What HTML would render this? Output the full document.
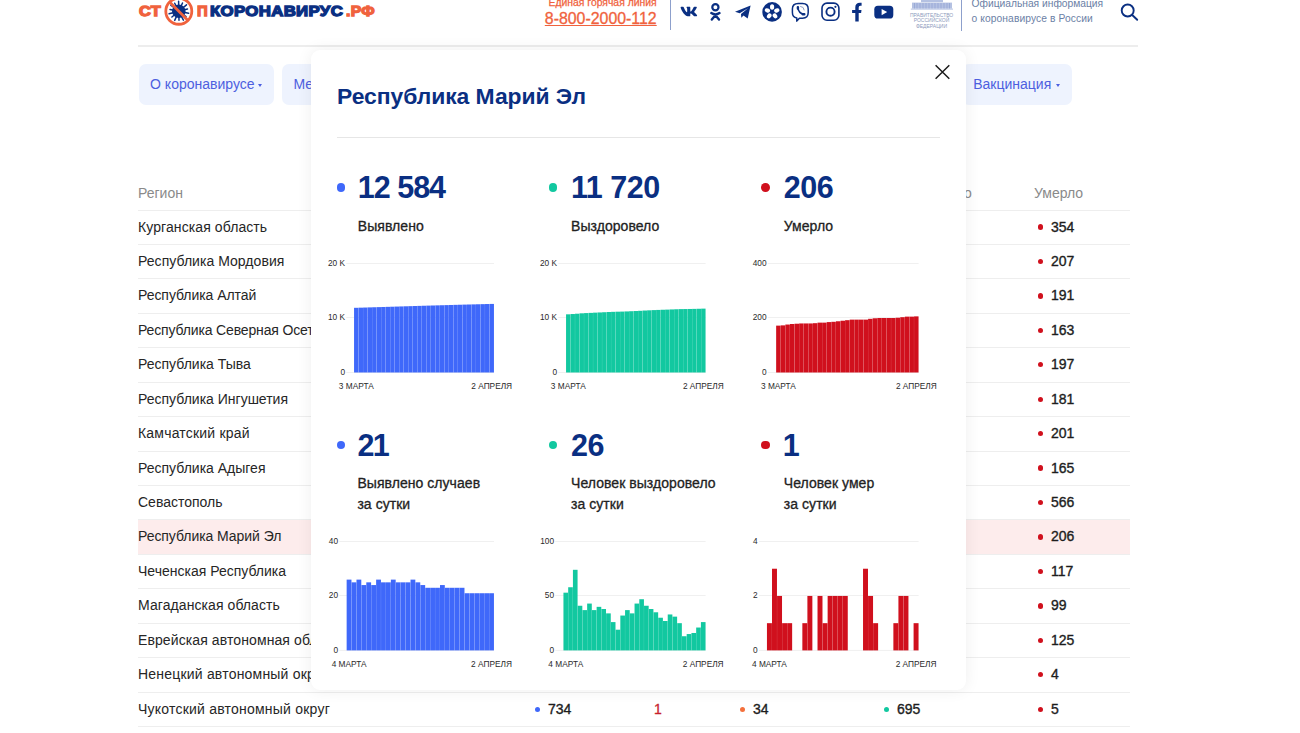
<!DOCTYPE html>
<html lang="ru">
<head>
<meta charset="utf-8">
<title>Стопкоронавирус.рф — Республика Марий Эл</title>
<style>
*{box-sizing:border-box;margin:0;padding:0}
html,body{width:1300px;height:733px;overflow:hidden;background:#fff}
body{font-family:"Liberation Sans",sans-serif;color:#222;position:relative}
.abs{position:absolute}
/* header */
.lg{position:absolute;top:3.05px;letter-spacing:0.3px;transform-origin:0 0;font-size:15px;line-height:16px;font-weight:bold;white-space:nowrap}
.lg.o{color:#f0623d;-webkit-text-stroke:1.3px #f0623d}
.lg.n{color:#0a2f82;-webkit-text-stroke:1.3px #0a2f82}
.gov{position:absolute;left:910px;width:43px;text-align:center;font-size:5px;line-height:5px;color:#8e9bbd;white-space:nowrap}
.hot1{position:absolute;left:548.5px;top:-4.2px;font-size:10.4px;line-height:14px;color:#f0623d;white-space:nowrap;-webkit-text-stroke:0.25px #f0623d}
.hot2{position:absolute;left:544.8px;top:9.7px;-webkit-text-stroke:0.3px #f0623d;font-size:15.9px;line-height:18px;color:#f0623d;text-decoration:underline;text-decoration-thickness:1px;text-underline-offset:1.3px;white-space:nowrap}
.vl{position:absolute;width:1.2px;background:#8da0cc}
.off{position:absolute;left:971.5px;top:-3.8px;font-size:10.25px;line-height:15.1px;color:#6c7fa6;white-space:nowrap}
.hsep{position:absolute;left:138px;top:45px;width:1000px;height:1.6px;background:#ededed}
.nav{position:absolute;top:63.9px;height:41.1px;border-radius:7px;background:#eef3fe;color:#4d5fe0;font-size:14px;line-height:41px;padding-left:11.2px;white-space:nowrap}
.nav b{position:absolute;top:20.5px;width:0;height:0;border-left:2.5px solid transparent;border-right:2.5px solid transparent;border-top:3.9px solid #4d5fe0;margin-left:-0.3px}
/* table */
.th{position:absolute;top:185px;font-size:14px;color:#8a8a8a;white-space:nowrap}
.tr{position:absolute;left:138px;width:992px;height:34.44px;border-top:1px solid #eeeeee;font-size:14px;line-height:33.6px;color:#262626;white-space:nowrap}
.tr.hl{background:#fdecec}
.tr span{position:absolute;top:0}
.tr .c0{left:0}
.tr .c1{-webkit-text-stroke:0.36px #1d1d1d;color:#1d1d1d;left:397px;}
.tr .c2{left:516px;color:#c81f2b;-webkit-text-stroke:0.3px #c81f2b}
.tr .c3{-webkit-text-stroke:0.36px #1d1d1d;color:#1d1d1d;left:602px}
.tr .c4{-webkit-text-stroke:0.36px #1d1d1d;color:#1d1d1d;left:746px}
.tr .c5{-webkit-text-stroke:0.36px #1d1d1d;color:#1d1d1d;left:900px}
.tr .d{display:inline-block;width:5.3px;height:5.3px;border-radius:50%;margin-right:7.8px;margin-left:-0.1px;position:relative;top:-1.8px}
/* modal */
.modal{position:absolute;left:311px;top:49.5px;width:655px;height:640.5px;background:#fff;border-radius:9px;box-shadow:0 0 16px rgba(0,0,0,.07)}
.title{position:absolute;left:337px;top:81.1px;font-size:22.9px;line-height:30px;font-weight:bold;color:#0a2f82;white-space:nowrap;letter-spacing:-0.05px}
.msep{position:absolute;left:337px;top:137px;width:603px;height:1px;background:#e6e6e6}
.dot{position:absolute;width:8.8px;height:8.8px;border-radius:50%}
.num{position:absolute;font-size:30.5px;line-height:34px;letter-spacing:-0.5px;font-weight:bold;color:#0a2f82;white-space:nowrap}
.lab{position:absolute;font-size:14px;line-height:21px;letter-spacing:0.05px;color:#222;white-space:nowrap;-webkit-text-stroke:0.3px #222}
svg text.ax{font-family:"Liberation Sans",sans-serif;font-size:8.3px;fill:#2a2a2a}
</style>
</head>
<body>
<!-- header -->
<div class="lg o" id="lg1" style="left:139.4px;transform:scaleX(1.09)">СТ</div>
<div class="lg o" id="lg2" style="left:197.45px;transform:scaleX(0.99)">П</div>
<div class="lg n" id="lg3" style="left:210.2px;transform:scaleX(1.12)">КОРОНАВИРУС</div>
<div class="lg o" id="lg4" style="left:346.1px;transform:scaleX(1.045)">.РФ</div>
<svg class="abs" style="left:160px;top:0" width="40" height="30" viewBox="160 0 40 30">
<g transform="translate(178.8 11.25)">
<g fill="none" stroke="#0a2f82" stroke-width="1.5" stroke-linecap="round">
<path d="M0 0L9.8 2.0M0 0L7.2 5.4M0 0L4.6 8.9M0 0L0.2 9.0M0 0L-4.1 9.1M0 0L-6.9 5.8M0 0L-9.7 2.5M0 0L-8.8 -1.8M0 0L-8.0 -6.0M0 0L-4.1 -8.0M0 0L-0.2 -10.0M0 0L3.7 -8.2M0 0L7.7 -6.4M0 0L8.7 -2.2"/>
</g>
<circle r="6.7" fill="#0a2f82"/>
<circle r="13" fill="none" stroke="#f0623d" stroke-width="2.8"/>
<path d="M-9.2-9.2L9.2 9.2" stroke="#f0623d" stroke-width="2.8"/>
</g>
</svg>
<div class="hot1" id="hot1">Единая горячая линия</div>
<div class="hot2" id="hot2">8-800-2000-112</div>
<div class="vl" style="left:670px;top:0;height:29.5px"></div>
<div class="vl" style="left:961.3px;top:0;height:30.5px"></div>
<svg class="abs" style="left:670px;top:0" width="480" height="34" viewBox="670 0 480 34">
<g fill="none" stroke="#0a2f82" stroke-linecap="round" stroke-linejoin="round">
<!-- vk -->
<!-- ok -->
<circle cx="715.4" cy="7.3" r="3.1" stroke-width="2.2"/>
<path d="M711.3 13.1Q715.4 15.8 719.5 13.1M715.4 15.2L711.8 19.6M715.4 15.2L719 19.6" stroke-width="2.4"/>
<!-- viber -->
<path d="M798.200 3.400h4.400q5.600 0 5.600 5.600v3.600q0 5.600-5.600 5.600h-3.200l-2.600 2.900v-3q-4.400-.6-4.400-5.500v-3.600q0-5.600 5.800-5.600z" stroke-width="1.500"/>
<path d="M798 7.600q-.1 2.800 1.900 4.700 1.900 1.900 3.900 1.700" stroke-width="1.700"/><path d="M797.900 7.100v1.400M802.800 14.300h1.500" stroke-width="2.400"/>
<path d="M800.600 6.400q3.400.2 3.600 3.600" stroke-width="1" stroke="#8d9cc4"/>
<!-- instagram -->
<rect x="822" y="3.100" width="16.900" height="17.100" rx="5" stroke-width="1.600"/>
<circle cx="830.500" cy="11.700" r="4.100" stroke-width="1.900"/>
<!-- search -->
<circle cx="1127.700" cy="10.500" r="6" stroke-width="1.900"/>
<path d="M1132.200 15L1137.200 19.800" stroke-width="1.900"/>
</g>
<g fill="#0a2f82">
<!-- vkf -->
<path transform="translate(680.03 4.0) scale(0.03075 0.0297)" d="M545 117.700c3.700-12.500 0-21.700-17.800-21.700h-58.900c-15 0-21.900 7.900-25.600 16.700 0 0-30 73.100-72.400 120.500-13.700 13.700-20 18.100-27.500 18.100-3.700 0-9.400-4.400-9.400-16.900V117.700c0-15-4.200-21.700-16.600-21.700h-92.600c-9.400 0-15 7-15 13.500 0 14.200 21.200 17.500 23.400 57.500v86.800c0 19-3.400 22.500-10.900 22.500-20 0-68.600-73.400-97.400-157.400-5.800-16.300-11.500-22.900-26.600-22.900H38.800c-16.800 0-20.200 7.900-20.200 16.700 0 15.600 20 93.100 93.100 195.500C160.400 378.100 229 416 291.400 416c37.500 0 42.100-8.400 42.100-22.900 0-66.800-3.400-73.100 15.400-73.100 8.700 0 23.700 4.400 58.700 38.100 40 40 46.600 57.900 69 57.900h58.900c16.800 0 25.200-8.400 20.300-25-11.200-34.900-86.900-106.700-90.300-111.500-8.700-11.200-6.200-16.200 0-26.200.1-.1 72-101.300 79.400-135.600z"/>
<!-- telegram -->
<path d="M735 11.700L750.600 5.600L747.700 18.600L743.500 15.500L741.300 17.700L741 14.100L748 8.200L739.700 13.300Z"/>
<!-- icq -->
<circle cx="772.100" cy="11.900" r="9.800"/>
<!-- insta dot -->
<circle cx="835.400" cy="6.800" r="1.100"/>
<!-- facebook -->
<path d="M855.300 21.400V13.100H852.100V9.900H855.300V7.300Q855.300 2.700 860 2.700H861.600V5.800H860.200Q858.700 5.800 858.700 7.400V9.900H861.500L861.100 13.100H858.700V21.400Z"/>
<!-- youtube -->
<rect x="874.300" y="5.700" width="19" height="12.800" rx="3.600"/>
</g>
<g fill="#fff">
<g transform="translate(772.100 11.900)">
<ellipse cx="0" cy="-4.900" rx="2.100" ry="2.700"/>
<ellipse cx="0" cy="-4.900" rx="2.100" ry="2.700" transform="rotate(72)"/>
<ellipse cx="0" cy="-4.900" rx="2.100" ry="2.700" transform="rotate(144)"/>
<ellipse cx="0" cy="-4.900" rx="2.100" ry="2.700" transform="rotate(216)"/>
<ellipse cx="0" cy="-4.900" rx="2.100" ry="2.700" transform="rotate(288)"/>
</g>
<path d="M881.600 9V15.200L887.200 12.100Z"/>
</g>
<!-- gov building -->
<g fill="#b4c1e2">
<rect x="921" y="0" width="22" height="2.200"/>
<rect x="912" y="2.600" width="40" height="6"/>
<rect x="910.800" y="8.600" width="42.200" height="1"/>
</g>
<g stroke="#8fa2d2" stroke-width=".7">
<path d="M914.500 3v5.500M917 3v5.500M920 3v5.500M923 3v5.500M926 3v5.500M929 3v5.500M932 3v5.500M935 3v5.500M938 3v5.500M941 3v5.500M944 3v5.500M947 3v5.500M949.500 3v5.500"/>
</g>
</svg>
<div class="gov" id="gov1" style="top:13.100px">ПРАВИТЕЛЬСТВО</div>
<div class="gov" id="gov2" style="top:18.300px">РОССИЙСКОЙ</div>
<div class="gov" id="gov3" style="top:23.600px">ФЕДЕРАЦИИ</div>
<div class="off" id="off">Официальная информация<br><span style="letter-spacing:0.1px">о коронавирусе в России</span></div>
<div class="hsep"></div>
<!-- nav -->
<div class="nav" style="left:138.9px;width:134.9px"><span>О коронавирусе</span><b style="left:119.4px"></b></div>
<div class="nav" style="left:282.3px;width:150px"><span>Меры поддержки</span><b style="left:135px"></b></div>
<div class="nav" style="left:442px;width:120px"><span>Что делать</span><b style="left:95px"></b></div>
<div class="nav" style="left:572px;width:105px"><span>Новости</span><b style="left:78px"></b></div>
<div class="nav" style="left:687px;width:130px"><span>Статистика</span><b style="left:102px"></b></div>
<div class="nav" style="left:827px;width:125px"><span>Материалы</span><b style="left:97px"></b></div>
<div class="nav" style="left:962px;width:110.4px"><span>Вакцинация</span><b style="left:94.2px"></b></div>
<!-- table -->
<div class="th" style="left:138px">Регион</div>
<div class="th" style="left:535px">Выявлено</div>
<div class="th" style="left:654px">Новые</div>
<div class="th" style="left:740px">Активные</div>
<div class="th" style="left:884px">Выздоровело</div>
<div class="th" style="left:1034px">Умерло</div>
<div class="tr" style="top:209.50px">
<span class="c0" style="letter-spacing:0.09px">Курганская область</span>
<span class="c1"><i class="d" style="background:#3f68fa"></i>25 812</span>
<span class="c2">94</span>
<span class="c3"><i class="d" style="background:#f4703c"></i>1 210</span>
<span class="c4"><i class="d" style="background:#12c8a0"></i>24 248</span>
<span class="c5"><i class="d" style="background:#d0101d"></i>354</span>
</div>
<div class="tr" style="top:243.94px">
<span class="c0" style="letter-spacing:0.04px">Республика Мордовия</span>
<span class="c1"><i class="d" style="background:#3f68fa"></i>23 904</span>
<span class="c2">61</span>
<span class="c3"><i class="d" style="background:#f4703c"></i>1 034</span>
<span class="c4"><i class="d" style="background:#12c8a0"></i>22 663</span>
<span class="c5"><i class="d" style="background:#d0101d"></i>207</span>
</div>
<div class="tr" style="top:278.38px">
<span class="c0" style="letter-spacing:-0.05px">Республика Алтай</span>
<span class="c1"><i class="d" style="background:#3f68fa"></i>17 412</span>
<span class="c2">17</span>
<span class="c3"><i class="d" style="background:#f4703c"></i>412</span>
<span class="c4"><i class="d" style="background:#12c8a0"></i>16 809</span>
<span class="c5"><i class="d" style="background:#d0101d"></i>191</span>
</div>
<div class="tr" style="top:312.82px">
<span class="c0" style="letter-spacing:-0.15px">Республика Северная Осетия</span>
<span class="c1"><i class="d" style="background:#3f68fa"></i>16 901</span>
<span class="c2">32</span>
<span class="c3"><i class="d" style="background:#f4703c"></i>720</span>
<span class="c4"><i class="d" style="background:#12c8a0"></i>16 018</span>
<span class="c5"><i class="d" style="background:#d0101d"></i>163</span>
</div>
<div class="tr" style="top:347.26px">
<span class="c0" style="letter-spacing:0px">Республика Тыва</span>
<span class="c1"><i class="d" style="background:#3f68fa"></i>16 388</span>
<span class="c2">12</span>
<span class="c3"><i class="d" style="background:#f4703c"></i>238</span>
<span class="c4"><i class="d" style="background:#12c8a0"></i>15 953</span>
<span class="c5"><i class="d" style="background:#d0101d"></i>197</span>
</div>
<div class="tr" style="top:381.70px">
<span class="c0" style="letter-spacing:0px">Республика Ингушетия</span>
<span class="c1"><i class="d" style="background:#3f68fa"></i>15 620</span>
<span class="c2">19</span>
<span class="c3"><i class="d" style="background:#f4703c"></i>301</span>
<span class="c4"><i class="d" style="background:#12c8a0"></i>15 138</span>
<span class="c5"><i class="d" style="background:#d0101d"></i>181</span>
</div>
<div class="tr" style="top:416.14px">
<span class="c0" style="letter-spacing:0.2px">Камчатский край</span>
<span class="c1"><i class="d" style="background:#3f68fa"></i>15 011</span>
<span class="c2">23</span>
<span class="c3"><i class="d" style="background:#f4703c"></i>260</span>
<span class="c4"><i class="d" style="background:#12c8a0"></i>14 550</span>
<span class="c5"><i class="d" style="background:#d0101d"></i>201</span>
</div>
<div class="tr" style="top:450.58px">
<span class="c0" style="letter-spacing:0px">Республика Адыгея</span>
<span class="c1"><i class="d" style="background:#3f68fa"></i>14 620</span>
<span class="c2">27</span>
<span class="c3"><i class="d" style="background:#f4703c"></i>389</span>
<span class="c4"><i class="d" style="background:#12c8a0"></i>14 066</span>
<span class="c5"><i class="d" style="background:#d0101d"></i>165</span>
</div>
<div class="tr" style="top:485.02px">
<span class="c0" style="letter-spacing:0px">Севастополь</span>
<span class="c1"><i class="d" style="background:#3f68fa"></i>14 211</span>
<span class="c2">48</span>
<span class="c3"><i class="d" style="background:#f4703c"></i>1 012</span>
<span class="c4"><i class="d" style="background:#12c8a0"></i>12 633</span>
<span class="c5"><i class="d" style="background:#d0101d"></i>566</span>
</div>
<div class="tr hl" style="top:519.46px">
<span class="c0" style="letter-spacing:-0.06px">Республика Марий Эл</span>
<span class="c1"><i class="d" style="background:#3f68fa"></i>12 584</span>
<span class="c2">21</span>
<span class="c3"><i class="d" style="background:#f4703c"></i>658</span>
<span class="c4"><i class="d" style="background:#12c8a0"></i>11 720</span>
<span class="c5"><i class="d" style="background:#d0101d"></i>206</span>
</div>
<div class="tr" style="top:553.90px">
<span class="c0" style="letter-spacing:0px">Чеченская Республика</span>
<span class="c1"><i class="d" style="background:#3f68fa"></i>11 804</span>
<span class="c2">13</span>
<span class="c3"><i class="d" style="background:#f4703c"></i>310</span>
<span class="c4"><i class="d" style="background:#12c8a0"></i>11 377</span>
<span class="c5"><i class="d" style="background:#d0101d"></i>117</span>
</div>
<div class="tr" style="top:588.34px">
<span class="c0" style="letter-spacing:0.08px">Магаданская область</span>
<span class="c1"><i class="d" style="background:#3f68fa"></i>8 703</span>
<span class="c2">9</span>
<span class="c3"><i class="d" style="background:#f4703c"></i>122</span>
<span class="c4"><i class="d" style="background:#12c8a0"></i>8 482</span>
<span class="c5"><i class="d" style="background:#d0101d"></i>99</span>
</div>
<div class="tr" style="top:622.78px">
<span class="c0" style="letter-spacing:0.1px">Еврейская автономная область</span>
<span class="c1"><i class="d" style="background:#3f68fa"></i>4 566</span>
<span class="c2">5</span>
<span class="c3"><i class="d" style="background:#f4703c"></i>77</span>
<span class="c4"><i class="d" style="background:#12c8a0"></i>4 364</span>
<span class="c5"><i class="d" style="background:#d0101d"></i>125</span>
</div>
<div class="tr" style="top:657.22px">
<span class="c0" style="letter-spacing:0.2px">Ненецкий автономный округ</span>
<span class="c1"><i class="d" style="background:#3f68fa"></i>1 082</span>
<span class="c2">0</span>
<span class="c3"><i class="d" style="background:#f4703c"></i>3</span>
<span class="c4"><i class="d" style="background:#12c8a0"></i>1 075</span>
<span class="c5"><i class="d" style="background:#d0101d"></i>4</span>
</div>
<div class="tr" style="top:691.66px">
<span class="c0" style="letter-spacing:0.22px">Чукотский автономный округ</span>
<span class="c1"><i class="d" style="background:#3f68fa"></i>734</span>
<span class="c2">1</span>
<span class="c3"><i class="d" style="background:#f4703c"></i>34</span>
<span class="c4"><i class="d" style="background:#12c8a0"></i>695</span>
<span class="c5"><i class="d" style="background:#d0101d"></i>5</span>
</div>
<div class="tr" style="top:726.10px;height:10px"></div>
<!-- modal -->
<div class="modal"></div>
<div class="title">Республика Марий Эл</div>
<div class="msep"></div>
<i class="dot" style="left:336.7px;top:183.1px;background:#3f68fa"></i><div class="num" style="left:357.8px;top:170.3px;letter-spacing:-1.0px">12 584</div><div class="lab" style="left:357.8px;top:215.6px">Выявлено</div>
<i class="dot" style="left:548.7px;top:183.1px;background:#12c8a0"></i><div class="num" style="left:571.0px;top:170.3px;letter-spacing:-0.5px">11 720</div><div class="lab" style="left:571.0px;top:215.6px">Выздоровело</div>
<i class="dot" style="left:761.3px;top:183.1px;background:#d0101d"></i><div class="num" style="left:783.8px;top:170.3px;letter-spacing:-0.5px">206</div><div class="lab" style="left:783.8px;top:215.6px">Умерло</div>
<i class="dot" style="left:336.7px;top:440.6px;background:#3f68fa"></i><div class="num" style="left:357.4px;top:427.8px;letter-spacing:-1.5px">21</div><div class="lab" style="left:357.4px;top:473.1px">Выявлено случаев<br>за сутки</div>
<i class="dot" style="left:548.7px;top:440.6px;background:#12c8a0"></i><div class="num" style="left:571.0px;top:427.8px;letter-spacing:-0.5px">26</div><div class="lab" style="left:571.0px;top:473.1px">Человек выздоровело<br>за сутки</div>
<i class="dot" style="left:761.3px;top:440.6px;background:#d0101d"></i><div class="num" style="left:783.8px;top:427.8px;letter-spacing:-0.5px"><span style="margin-left:-1px">1</span></div><div class="lab" style="left:783.8px;top:473.1px">Человек умер<br>за сутки</div>
<svg class="abs" style="left:0;top:0" width="1300" height="733" viewBox="0 0 1300 733">
<line x1="346.3" y1="263.5" x2="494.0" y2="263.5" stroke="#f0f0f0" stroke-width="1"/>
<line x1="346.3" y1="317.5" x2="494.0" y2="317.5" stroke="#f0f0f0" stroke-width="1"/>
<line x1="346.3" y1="372.5" x2="494.0" y2="372.5" stroke="#f0f0f0" stroke-width="1"/>
<rect x="354.05" y="307.80" width="4.42" height="64.70" fill="#3f68fa"/>
<rect x="358.57" y="307.66" width="4.42" height="64.84" fill="#3f68fa"/>
<rect x="363.08" y="307.53" width="4.42" height="64.97" fill="#3f68fa"/>
<rect x="367.60" y="307.38" width="4.42" height="65.12" fill="#3f68fa"/>
<rect x="372.11" y="307.25" width="4.42" height="65.25" fill="#3f68fa"/>
<rect x="376.63" y="307.12" width="4.42" height="65.38" fill="#3f68fa"/>
<rect x="381.15" y="306.99" width="4.42" height="65.51" fill="#3f68fa"/>
<rect x="385.66" y="306.84" width="4.42" height="65.66" fill="#3f68fa"/>
<rect x="390.18" y="306.71" width="4.42" height="65.79" fill="#3f68fa"/>
<rect x="394.70" y="306.57" width="4.42" height="65.93" fill="#3f68fa"/>
<rect x="399.21" y="306.43" width="4.42" height="66.07" fill="#3f68fa"/>
<rect x="403.73" y="306.29" width="4.42" height="66.21" fill="#3f68fa"/>
<rect x="408.24" y="306.16" width="4.42" height="66.34" fill="#3f68fa"/>
<rect x="412.76" y="306.02" width="4.42" height="66.48" fill="#3f68fa"/>
<rect x="417.28" y="305.88" width="4.42" height="66.62" fill="#3f68fa"/>
<rect x="421.79" y="305.74" width="4.42" height="66.76" fill="#3f68fa"/>
<rect x="426.31" y="305.61" width="4.42" height="66.89" fill="#3f68fa"/>
<rect x="430.82" y="305.49" width="4.42" height="67.01" fill="#3f68fa"/>
<rect x="435.34" y="305.36" width="4.42" height="67.14" fill="#3f68fa"/>
<rect x="439.86" y="305.24" width="4.42" height="67.26" fill="#3f68fa"/>
<rect x="444.37" y="305.11" width="4.42" height="67.39" fill="#3f68fa"/>
<rect x="448.89" y="304.98" width="4.42" height="67.52" fill="#3f68fa"/>
<rect x="453.40" y="304.85" width="4.42" height="67.65" fill="#3f68fa"/>
<rect x="457.92" y="304.73" width="4.42" height="67.77" fill="#3f68fa"/>
<rect x="462.44" y="304.60" width="4.42" height="67.90" fill="#3f68fa"/>
<rect x="466.95" y="304.49" width="4.42" height="68.01" fill="#3f68fa"/>
<rect x="471.47" y="304.38" width="4.42" height="68.12" fill="#3f68fa"/>
<rect x="475.99" y="304.26" width="4.42" height="68.24" fill="#3f68fa"/>
<rect x="480.50" y="304.15" width="4.42" height="68.35" fill="#3f68fa"/>
<rect x="485.02" y="304.03" width="4.42" height="68.47" fill="#3f68fa"/>
<rect x="489.53" y="303.92" width="4.42" height="68.58" fill="#3f68fa"/>
<text x="345.0" y="266.2" text-anchor="end" class="ax">20 K</text>
<text x="345.0" y="320.2" text-anchor="end" class="ax">10 K</text>
<text x="345.0" y="375.2" text-anchor="end" class="ax">0</text>
<text x="356.3" y="389.0" text-anchor="middle" class="ax">3 МАРТА</text>
<text x="491.7" y="389.0" text-anchor="middle" class="ax">2 АПРЕЛЯ</text>
<line x1="558.3" y1="263.5" x2="705.6" y2="263.5" stroke="#f0f0f0" stroke-width="1"/>
<line x1="558.3" y1="317.5" x2="705.6" y2="317.5" stroke="#f0f0f0" stroke-width="1"/>
<line x1="558.3" y1="372.5" x2="705.6" y2="372.5" stroke="#f0f0f0" stroke-width="1"/>
<rect x="566.05" y="314.32" width="4.40" height="58.18" fill="#12c8a0"/>
<rect x="570.55" y="314.03" width="4.40" height="58.47" fill="#12c8a0"/>
<rect x="575.06" y="313.71" width="4.40" height="58.79" fill="#12c8a0"/>
<rect x="579.56" y="313.31" width="4.40" height="59.19" fill="#12c8a0"/>
<rect x="584.06" y="313.08" width="4.40" height="59.42" fill="#12c8a0"/>
<rect x="588.57" y="312.88" width="4.40" height="59.62" fill="#12c8a0"/>
<rect x="593.07" y="312.65" width="4.40" height="59.85" fill="#12c8a0"/>
<rect x="597.57" y="312.45" width="4.40" height="60.05" fill="#12c8a0"/>
<rect x="602.08" y="312.23" width="4.40" height="60.27" fill="#12c8a0"/>
<rect x="606.58" y="312.02" width="4.40" height="60.48" fill="#12c8a0"/>
<rect x="611.08" y="311.84" width="4.40" height="60.66" fill="#12c8a0"/>
<rect x="615.59" y="311.69" width="4.40" height="60.81" fill="#12c8a0"/>
<rect x="620.09" y="311.59" width="4.40" height="60.91" fill="#12c8a0"/>
<rect x="624.59" y="311.42" width="4.40" height="61.08" fill="#12c8a0"/>
<rect x="629.10" y="311.21" width="4.40" height="61.29" fill="#12c8a0"/>
<rect x="633.60" y="311.03" width="4.40" height="61.47" fill="#12c8a0"/>
<rect x="638.10" y="310.80" width="4.40" height="61.70" fill="#12c8a0"/>
<rect x="642.60" y="310.54" width="4.40" height="61.96" fill="#12c8a0"/>
<rect x="647.11" y="310.32" width="4.40" height="62.18" fill="#12c8a0"/>
<rect x="651.61" y="310.11" width="4.40" height="62.39" fill="#12c8a0"/>
<rect x="656.11" y="309.92" width="4.40" height="62.58" fill="#12c8a0"/>
<rect x="660.62" y="309.75" width="4.40" height="62.75" fill="#12c8a0"/>
<rect x="665.12" y="309.61" width="4.40" height="62.89" fill="#12c8a0"/>
<rect x="669.62" y="309.43" width="4.40" height="63.07" fill="#12c8a0"/>
<rect x="674.13" y="309.26" width="4.40" height="63.24" fill="#12c8a0"/>
<rect x="678.63" y="309.12" width="4.40" height="63.38" fill="#12c8a0"/>
<rect x="683.13" y="309.05" width="4.40" height="63.45" fill="#12c8a0"/>
<rect x="687.64" y="308.97" width="4.40" height="63.53" fill="#12c8a0"/>
<rect x="692.14" y="308.88" width="4.40" height="63.62" fill="#12c8a0"/>
<rect x="696.64" y="308.77" width="4.40" height="63.73" fill="#12c8a0"/>
<rect x="701.15" y="308.63" width="4.40" height="63.87" fill="#12c8a0"/>
<text x="557.0" y="266.2" text-anchor="end" class="ax">20 K</text>
<text x="557.0" y="320.2" text-anchor="end" class="ax">10 K</text>
<text x="557.0" y="375.2" text-anchor="end" class="ax">0</text>
<text x="568.3" y="389.0" text-anchor="middle" class="ax">3 МАРТА</text>
<text x="703.3" y="389.0" text-anchor="middle" class="ax">2 АПРЕЛЯ</text>
<line x1="767.8" y1="263.5" x2="918.6" y2="263.5" stroke="#f0f0f0" stroke-width="1"/>
<line x1="767.8" y1="317.5" x2="918.6" y2="317.5" stroke="#f0f0f0" stroke-width="1"/>
<line x1="767.8" y1="372.5" x2="918.6" y2="372.5" stroke="#f0f0f0" stroke-width="1"/>
<rect x="776.15" y="325.63" width="4.50" height="46.87" fill="#d0101d"/>
<rect x="780.75" y="325.36" width="4.50" height="47.14" fill="#d0101d"/>
<rect x="785.34" y="324.54" width="4.50" height="47.96" fill="#d0101d"/>
<rect x="789.94" y="324.00" width="4.50" height="48.51" fill="#d0101d"/>
<rect x="794.54" y="323.72" width="4.50" height="48.78" fill="#d0101d"/>
<rect x="799.13" y="323.45" width="4.50" height="49.05" fill="#d0101d"/>
<rect x="803.73" y="323.45" width="4.50" height="49.05" fill="#d0101d"/>
<rect x="808.33" y="323.45" width="4.50" height="49.05" fill="#d0101d"/>
<rect x="812.92" y="323.18" width="4.50" height="49.32" fill="#d0101d"/>
<rect x="817.52" y="322.63" width="4.50" height="49.87" fill="#d0101d"/>
<rect x="822.12" y="322.63" width="4.50" height="49.87" fill="#d0101d"/>
<rect x="826.71" y="322.09" width="4.50" height="50.41" fill="#d0101d"/>
<rect x="831.31" y="321.81" width="4.50" height="50.69" fill="#d0101d"/>
<rect x="835.91" y="321.27" width="4.50" height="51.23" fill="#d0101d"/>
<rect x="840.50" y="320.73" width="4.50" height="51.77" fill="#d0101d"/>
<rect x="845.10" y="320.18" width="4.50" height="52.32" fill="#d0101d"/>
<rect x="849.70" y="319.63" width="4.50" height="52.87" fill="#d0101d"/>
<rect x="854.30" y="319.63" width="4.50" height="52.87" fill="#d0101d"/>
<rect x="858.89" y="319.63" width="4.50" height="52.87" fill="#d0101d"/>
<rect x="863.49" y="319.63" width="4.50" height="52.87" fill="#d0101d"/>
<rect x="868.09" y="318.82" width="4.50" height="53.68" fill="#d0101d"/>
<rect x="872.68" y="318.27" width="4.50" height="54.23" fill="#d0101d"/>
<rect x="877.28" y="318.00" width="4.50" height="54.50" fill="#d0101d"/>
<rect x="881.88" y="318.00" width="4.50" height="54.50" fill="#d0101d"/>
<rect x="886.47" y="318.00" width="4.50" height="54.50" fill="#d0101d"/>
<rect x="891.07" y="318.00" width="4.50" height="54.50" fill="#d0101d"/>
<rect x="895.67" y="317.73" width="4.50" height="54.77" fill="#d0101d"/>
<rect x="900.26" y="317.18" width="4.50" height="55.32" fill="#d0101d"/>
<rect x="904.86" y="316.64" width="4.50" height="55.86" fill="#d0101d"/>
<rect x="909.46" y="316.64" width="4.50" height="55.86" fill="#d0101d"/>
<rect x="914.05" y="316.37" width="4.50" height="56.13" fill="#d0101d"/>
<text x="766.5" y="266.2" text-anchor="end" class="ax">400</text>
<text x="766.5" y="320.2" text-anchor="end" class="ax">200</text>
<text x="766.5" y="375.2" text-anchor="end" class="ax">0</text>
<text x="778.4" y="389.0" text-anchor="middle" class="ax">3 МАРТА</text>
<text x="916.3" y="389.0" text-anchor="middle" class="ax">2 АПРЕЛЯ</text>
<line x1="339.3" y1="541.5" x2="494.0" y2="541.5" stroke="#f0f0f0" stroke-width="1"/>
<line x1="339.3" y1="595.5" x2="494.0" y2="595.5" stroke="#f0f0f0" stroke-width="1"/>
<line x1="339.3" y1="650.4" x2="494.0" y2="650.4" stroke="#f0f0f0" stroke-width="1"/>
<rect x="346.65" y="579.62" width="4.81" height="70.78" fill="#3f68fa"/>
<rect x="351.56" y="582.34" width="4.81" height="68.06" fill="#3f68fa"/>
<rect x="356.48" y="579.62" width="4.81" height="70.78" fill="#3f68fa"/>
<rect x="361.39" y="585.06" width="4.81" height="65.34" fill="#3f68fa"/>
<rect x="366.30" y="582.34" width="4.81" height="68.06" fill="#3f68fa"/>
<rect x="371.22" y="585.06" width="4.81" height="65.34" fill="#3f68fa"/>
<rect x="376.13" y="579.62" width="4.81" height="70.78" fill="#3f68fa"/>
<rect x="381.04" y="582.34" width="4.81" height="68.06" fill="#3f68fa"/>
<rect x="385.96" y="582.34" width="4.81" height="68.06" fill="#3f68fa"/>
<rect x="390.87" y="579.62" width="4.81" height="70.78" fill="#3f68fa"/>
<rect x="395.78" y="582.34" width="4.81" height="68.06" fill="#3f68fa"/>
<rect x="400.70" y="582.34" width="4.81" height="68.06" fill="#3f68fa"/>
<rect x="405.61" y="582.34" width="4.81" height="68.06" fill="#3f68fa"/>
<rect x="410.52" y="579.62" width="4.81" height="70.78" fill="#3f68fa"/>
<rect x="415.44" y="582.34" width="4.81" height="68.06" fill="#3f68fa"/>
<rect x="420.35" y="585.06" width="4.81" height="65.34" fill="#3f68fa"/>
<rect x="425.26" y="587.78" width="4.81" height="62.62" fill="#3f68fa"/>
<rect x="430.18" y="587.78" width="4.81" height="62.62" fill="#3f68fa"/>
<rect x="435.09" y="587.78" width="4.81" height="62.62" fill="#3f68fa"/>
<rect x="440.00" y="585.06" width="4.81" height="65.34" fill="#3f68fa"/>
<rect x="444.92" y="587.78" width="4.81" height="62.62" fill="#3f68fa"/>
<rect x="449.83" y="587.78" width="4.81" height="62.62" fill="#3f68fa"/>
<rect x="454.74" y="587.78" width="4.81" height="62.62" fill="#3f68fa"/>
<rect x="459.66" y="587.78" width="4.81" height="62.62" fill="#3f68fa"/>
<rect x="464.57" y="593.23" width="4.81" height="57.17" fill="#3f68fa"/>
<rect x="469.48" y="593.23" width="4.81" height="57.17" fill="#3f68fa"/>
<rect x="474.40" y="593.23" width="4.81" height="57.17" fill="#3f68fa"/>
<rect x="479.31" y="593.23" width="4.81" height="57.17" fill="#3f68fa"/>
<rect x="484.22" y="593.23" width="4.81" height="57.17" fill="#3f68fa"/>
<rect x="489.14" y="593.23" width="4.81" height="57.17" fill="#3f68fa"/>
<text x="338.0" y="544.2" text-anchor="end" class="ax">40</text>
<text x="338.0" y="598.2" text-anchor="end" class="ax">20</text>
<text x="338.0" y="653.1" text-anchor="end" class="ax">0</text>
<text x="349.1" y="667.0" text-anchor="middle" class="ax">4 МАРТА</text>
<text x="491.5" y="667.0" text-anchor="middle" class="ax">2 АПРЕЛЯ</text>
<line x1="555.3" y1="541.5" x2="705.6" y2="541.5" stroke="#f0f0f0" stroke-width="1"/>
<line x1="555.3" y1="595.5" x2="705.6" y2="595.5" stroke="#f0f0f0" stroke-width="1"/>
<line x1="555.3" y1="650.4" x2="705.6" y2="650.4" stroke="#f0f0f0" stroke-width="1"/>
<rect x="563.45" y="592.68" width="4.64" height="57.72" fill="#12c8a0"/>
<rect x="568.19" y="587.24" width="4.64" height="63.16" fill="#12c8a0"/>
<rect x="572.93" y="569.81" width="4.64" height="80.59" fill="#12c8a0"/>
<rect x="577.67" y="605.75" width="4.64" height="44.65" fill="#12c8a0"/>
<rect x="582.41" y="610.11" width="4.64" height="40.29" fill="#12c8a0"/>
<rect x="587.15" y="603.57" width="4.64" height="46.83" fill="#12c8a0"/>
<rect x="591.89" y="610.11" width="4.64" height="40.29" fill="#12c8a0"/>
<rect x="596.63" y="606.84" width="4.64" height="43.56" fill="#12c8a0"/>
<rect x="601.37" y="609.02" width="4.64" height="41.38" fill="#12c8a0"/>
<rect x="606.11" y="613.37" width="4.64" height="37.03" fill="#12c8a0"/>
<rect x="610.85" y="622.09" width="4.64" height="28.31" fill="#12c8a0"/>
<rect x="615.59" y="629.71" width="4.64" height="20.69" fill="#12c8a0"/>
<rect x="620.33" y="615.55" width="4.64" height="34.85" fill="#12c8a0"/>
<rect x="625.07" y="610.11" width="4.64" height="40.29" fill="#12c8a0"/>
<rect x="629.81" y="613.37" width="4.64" height="37.03" fill="#12c8a0"/>
<rect x="634.55" y="603.57" width="4.64" height="46.83" fill="#12c8a0"/>
<rect x="639.29" y="599.22" width="4.64" height="51.18" fill="#12c8a0"/>
<rect x="644.03" y="605.75" width="4.64" height="44.65" fill="#12c8a0"/>
<rect x="648.77" y="609.02" width="4.64" height="41.38" fill="#12c8a0"/>
<rect x="653.51" y="612.28" width="4.64" height="38.11" fill="#12c8a0"/>
<rect x="658.25" y="617.73" width="4.64" height="32.67" fill="#12c8a0"/>
<rect x="662.99" y="621.00" width="4.64" height="29.40" fill="#12c8a0"/>
<rect x="667.73" y="614.46" width="4.64" height="35.94" fill="#12c8a0"/>
<rect x="672.47" y="616.64" width="4.64" height="33.76" fill="#12c8a0"/>
<rect x="677.21" y="623.17" width="4.64" height="27.22" fill="#12c8a0"/>
<rect x="681.95" y="636.24" width="4.64" height="14.16" fill="#12c8a0"/>
<rect x="686.69" y="634.06" width="4.64" height="16.33" fill="#12c8a0"/>
<rect x="691.43" y="632.98" width="4.64" height="17.42" fill="#12c8a0"/>
<rect x="696.17" y="627.53" width="4.64" height="22.87" fill="#12c8a0"/>
<rect x="700.91" y="622.09" width="4.64" height="28.31" fill="#12c8a0"/>
<text x="554.0" y="544.2" text-anchor="end" class="ax">100</text>
<text x="554.0" y="598.2" text-anchor="end" class="ax">50</text>
<text x="554.0" y="653.1" text-anchor="end" class="ax">0</text>
<text x="565.8" y="667.0" text-anchor="middle" class="ax">4 МАРТА</text>
<text x="703.2" y="667.0" text-anchor="middle" class="ax">2 АПРЕЛЯ</text>
<line x1="759.0" y1="541.5" x2="918.6" y2="541.5" stroke="#f0f0f0" stroke-width="1"/>
<line x1="759.0" y1="595.5" x2="918.6" y2="595.5" stroke="#f0f0f0" stroke-width="1"/>
<line x1="759.0" y1="650.4" x2="918.6" y2="650.4" stroke="#f0f0f0" stroke-width="1"/>
<rect x="766.95" y="623.17" width="4.96" height="27.22" fill="#d0101d"/>
<rect x="772.01" y="568.73" width="4.96" height="81.67" fill="#d0101d"/>
<rect x="777.06" y="595.95" width="4.96" height="54.45" fill="#d0101d"/>
<rect x="782.12" y="623.17" width="4.96" height="27.22" fill="#d0101d"/>
<rect x="787.18" y="623.17" width="4.96" height="27.22" fill="#d0101d"/>
<rect x="802.35" y="623.17" width="4.96" height="27.22" fill="#d0101d"/>
<rect x="807.40" y="595.95" width="4.96" height="54.45" fill="#d0101d"/>
<rect x="817.52" y="595.95" width="4.96" height="54.45" fill="#d0101d"/>
<rect x="822.57" y="623.17" width="4.96" height="27.22" fill="#d0101d"/>
<rect x="827.63" y="595.95" width="4.96" height="54.45" fill="#d0101d"/>
<rect x="832.69" y="595.95" width="4.96" height="54.45" fill="#d0101d"/>
<rect x="837.74" y="595.95" width="4.96" height="54.45" fill="#d0101d"/>
<rect x="842.80" y="595.95" width="4.96" height="54.45" fill="#d0101d"/>
<rect x="863.03" y="568.73" width="4.96" height="81.67" fill="#d0101d"/>
<rect x="868.08" y="595.95" width="4.96" height="54.45" fill="#d0101d"/>
<rect x="873.14" y="623.17" width="4.96" height="27.22" fill="#d0101d"/>
<rect x="893.37" y="623.17" width="4.96" height="27.22" fill="#d0101d"/>
<rect x="898.42" y="595.95" width="4.96" height="54.45" fill="#d0101d"/>
<rect x="903.48" y="595.95" width="4.96" height="54.45" fill="#d0101d"/>
<rect x="913.59" y="623.17" width="4.96" height="27.22" fill="#d0101d"/>
<text x="757.7" y="544.2" text-anchor="end" class="ax">4</text>
<text x="757.7" y="598.2" text-anchor="end" class="ax">2</text>
<text x="757.7" y="653.1" text-anchor="end" class="ax">0</text>
<text x="769.4" y="667.0" text-anchor="middle" class="ax">4 МАРТА</text>
<text x="916.1" y="667.0" text-anchor="middle" class="ax">2 АПРЕЛЯ</text>
<path d="M935.6 65.300L949.300 78.700M949.300 65.300L935.600 78.700" stroke="#1c1c1c" stroke-width="1.500" fill="none"/>
</svg>
</body>
</html>
